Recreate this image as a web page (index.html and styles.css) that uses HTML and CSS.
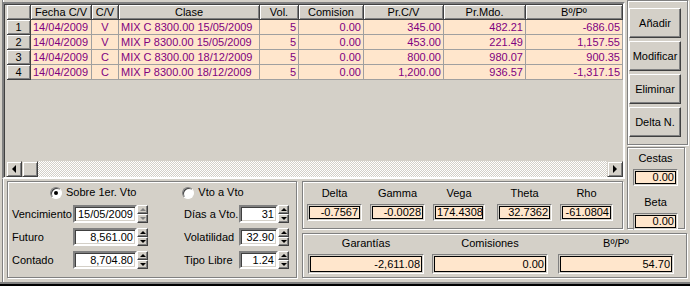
FILE: index.html
```html
<!DOCTYPE html>
<html lang="es">
<head>
  <meta charset="UTF-8" />
  <title>Cartera de opciones</title>
  <link rel="stylesheet" href="styles.css">
</head>
<body>
  <div class="window">
    <div class="form">

      <div class="gridframe">
        <table class="grid">
          <colgroup>
            <col class="w24"><col class="w61"><col class="w27"><col class="w141"><col class="w39"><col class="w65"><col class="w80"><col class="w82"><col class="w97">
          </colgroup>
          <tr>
            <th></th><th>Fecha C/V</th><th>C/V</th><th>Clase</th><th>Vol.</th><th>Comision</th><th>Pr.C/V</th><th>Pr.Mdo.</th><th>Bº/Pº</th>
          </tr>
          <tr>
            <th>1</th><td>14/04/2009</td><td class="c">V</td><td>MIX C 8300.00 15/05/2009</td><td class="r">5</td><td class="r">0.00</td><td class="r">345.00</td><td class="r">482.21</td><td class="r">-686.05</td>
          </tr>
          <tr>
            <th>2</th><td>14/04/2009</td><td class="c">V</td><td>MIX P 8300.00 15/05/2009</td><td class="r">5</td><td class="r">0.00</td><td class="r">453.00</td><td class="r">221.49</td><td class="r">1,157.55</td>
          </tr>
          <tr>
            <th>3</th><td>14/04/2009</td><td class="c">C</td><td>MIX C 8300.00 18/12/2009</td><td class="r">5</td><td class="r">0.00</td><td class="r">800.00</td><td class="r">980.07</td><td class="r">900.35</td>
          </tr>
          <tr>
            <th>4</th><td>14/04/2009</td><td class="c">C</td><td>MIX P 8300.00 18/12/2009</td><td class="r">5</td><td class="r">0.00</td><td class="r">1,200.00</td><td class="r">936.57</td><td class="r">-1,317.15</td>
          </tr>
        </table>
        <div class="hscroll">
          <span class="sb-btn"><i class="tri-left"></i></span>
          <span class="sb-btn"></span>
          <span class="sb-track"></span>
          <span class="sb-btn"><i class="tri-right"></i></span>
        </div>
      </div>

      <div class="group buttons">
        <button class="btn">Añadir</button>
        <button class="btn">Modificar</button>
        <button class="btn">Eliminar</button>
        <button class="btn">Delta N.</button>
      </div>

      <div class="group cestas">
        <div class="cap">Cestas</div>
        <div class="val">0.00</div>
        <div class="cap">Beta</div>
        <div class="val">0.00</div>
      </div>

      <div class="group params">
        <div class="radios">
          <span class="radio on"><i class="circle"></i>Sobre 1er. Vto</span>
          <span class="radio second"><i class="circle"></i>Vto a Vto</span>
        </div>
        <div class="fields">
          <span class="lbl">Vencimiento</span>
          <span class="spin"><span class="edit">15/05/2009</span><span class="updown off"><b><i class="tri-up"></i></b><b><i class="tri-down"></i></b></span></span>
          <span class="lbl">Días a Vto.</span>
          <span class="spin short"><span class="edit">31</span><span class="updown"><b><i class="tri-up"></i></b><b><i class="tri-down"></i></b></span></span>

          <span class="lbl">Futuro</span>
          <span class="spin"><span class="edit">8,561.00</span><span class="updown"><b><i class="tri-up"></i></b><b><i class="tri-down"></i></b></span></span>
          <span class="lbl">Volatilidad</span>
          <span class="spin short"><span class="edit">32.90</span><span class="updown"><b><i class="tri-up"></i></b><b><i class="tri-down"></i></b></span></span>

          <span class="lbl">Contado</span>
          <span class="spin"><span class="edit">8,704.80</span><span class="updown"><b><i class="tri-up"></i></b><b><i class="tri-down"></i></b></span></span>
          <span class="lbl">Tipo Libre</span>
          <span class="spin short"><span class="edit">1.24</span><span class="updown"><b><i class="tri-up"></i></b><b><i class="tri-down"></i></b></span></span>
        </div>
      </div>

      <div class="group greeks">
        <div class="cell"><div class="cap">Delta</div><div class="val">-0.7567</div></div>
        <div class="cell"><div class="cap">Gamma</div><div class="val">-0.0028</div></div>
        <div class="cell vega"><div class="cap">Vega</div><div class="val">174.4308</div></div>
        <div class="cell"><div class="cap">Theta</div><div class="val">32.7362</div></div>
        <div class="cell"><div class="cap">Rho</div><div class="val">-61.0804</div></div>
      </div>

      <div class="group totals">
        <div class="cell"><div class="cap">Garantías</div><div class="val">-2,611.08</div></div>
        <div class="cell"><div class="cap">Comisiones</div><div class="val">0.00</div></div>
        <div class="cell last"><div class="cap">Bº/Pº</div><div class="val">54.70</div></div>
      </div>

    </div>
  </div>
</body>
</html>
```

FILE: styles.css
```css
body {
  margin: 0;
  background: #d4d0c8;
  font-family: "Liberation Sans", Arial, sans-serif;
  font-size: 11px;
  color: #000;
}
.window {
  width: 690px;
  height: 286px;
  box-sizing: border-box;
  border-bottom: 2px solid #000;
}
.form {
  height: 284px;
  box-sizing: border-box;
  border-bottom: 2px solid #808080;
  display: grid;
  grid-template-columns: 297px 328px 65px;
  grid-template-rows: 146px 34px 51px 51px;
  /* left edge of the outer panel */
  background:
    linear-gradient(#808080, #808080) 2px 0 / 1px 100% no-repeat,
    linear-gradient(#fff, #fff) 3px 0 / 1px 100% no-repeat;
}

/* 3d helpers */
.group {
  border: 1px solid #808080;
  box-shadow: inset 1px 1px #fff, 1px 1px #fff;
  box-sizing: border-box;
  background: #d4d0c8;
}

/* string grid */
.gridframe {
  grid-column: 1 / 3;
  grid-row: 1 / 3;
  margin: 2px 0 1px 2px;
  border: 2px solid;
  border-color: #808080 #fff #fff #808080;
  box-shadow: inset 1px 1px #404040, inset -1px -1px #d4d0c8;
  background: #d4d0c8;
  padding: 1px 0 0 2px;
  display: flex;
  flex-direction: column;
}
.grid {
  border-collapse: separate;
  border-spacing: 0;
  table-layout: fixed;
  width: 616px;
  margin-left: 1px;
}
.w24 { width: 24px; }
.w61 { width: 61px; }
.w27 { width: 27px; }
.w141 { width: 141px; }
.w39 { width: 39px; }
.w65 { width: 65px; }
.w80 { width: 80px; }
.w82 { width: 82px; }
.w97 { width: 97px; }
.grid th,
.grid td {
  height: 14px;
  line-height: 14px;
  padding: 0 2px;
  white-space: nowrap;
  overflow: hidden;
  border-right: 1px solid #a0a0a0;
  border-bottom: 1px solid #a0a0a0;
}
.grid th {
  font-weight: normal;
  background: #d4d0c8;
  color: #000;
  box-shadow: inset 1px 1px #fff, inset -1px -1px #808080;
  border-color: #404040;
}
.grid td {
  background: #ffe6cc;
  color: #800080;
}
.grid td.c { text-align: center; }
.grid td.r { text-align: right; }

.hscroll {
  margin-top: auto;
  height: 16px;
  display: flex;
}
.sb-btn {
  width: 16px;
  height: 16px;
  box-sizing: border-box;
  border: 1px solid;
  border-color: #d4d0c8 #404040 #404040 #d4d0c8;
  box-shadow: inset 1px 1px #fff, inset -1px -1px #808080;
  background: #d4d0c8;
  display: flex;
  align-items: center;
  justify-content: center;
}
.sb-track {
  flex: 1;
  background: repeating-conic-gradient(#fff 0 25%, #d4d0c8 0 50%) 0 0 / 2px 2px;
}
.tri-left,
.tri-right,
.tri-up,
.tri-down {
  display: block;
  width: 0;
  height: 0;
  border: solid transparent;
}
.tri-left { border-width: 4px 4px 4px 0; border-right-color: #000; }
.tri-right { border-width: 4px 0 4px 4px; border-left-color: #000; }
.tri-up { border-width: 0 3px 3px; border-bottom-color: #000; }
.tri-down { border-width: 3px 3px 0; border-top-color: #000; }

/* right buttons */
.buttons {
  grid-column: 3;
  grid-row: 1;
  margin: 0 2px 1px 2px;
  padding: 7px 0 0 1px;
  display: flex;
  flex-direction: column;
  gap: 3px;
}
.btn {
  width: 52px;
  height: 30px;
  padding: 0;
  font: inherit;
  color: #000;
  background: #d4d0c8;
  border: 1px solid;
  border-color: #fff #404040 #404040 #fff;
  box-shadow: inset -1px -1px #808080;
}

/* value boxes */
.val {
  height: 17px;
  line-height: 11px;
  box-sizing: border-box;
  border: 1px solid;
  border-color: #808080 #fff #fff #808080;
  box-shadow: inset 0 0 0 1px #d4d0c8, inset 0 0 0 2px #000;
  background: #ffe6cc;
  text-align: right;
  padding: 2px 3px 0;
}
.cap {
  text-align: center;
  line-height: 13px;
}

.cestas {
  grid-column: 3;
  grid-row: 2 / 4;
  margin: 1px 5px 2px 2px;
  padding: 4px 6px 0 5px;
}
.cestas .val { margin: 4px 0 10px; }
.cestas .val:last-child { margin-bottom: 0; }

/* parameters */
.params {
  grid-column: 1;
  grid-row: 3 / 5;
  margin: 1px 0 4px 7px;
  padding: 4px 0 0 4px;
}
.radios {
  display: flex;
  height: 13px;
  line-height: 13px;
  padding-left: 38px;
}
.radio {
  display: flex;
  align-items: center;
  gap: 4px;
}
.radio.second { margin-left: 46px; }
.circle {
  width: 12px;
  height: 12px;
  box-sizing: border-box;
  border-radius: 50%;
  border: 1px solid;
  border-color: #808080 #fff #fff #808080;
  box-shadow: inset 1px 1px #404040;
  background: #fff;
  display: flex;
  align-items: center;
  justify-content: center;
}
.radio.on .circle::after {
  content: "";
  width: 4px;
  height: 4px;
  border-radius: 50%;
  background: #000;
}
.fields {
  margin-top: 6px;
  display: grid;
  grid-template-columns: 61px 111px 55px 50px;
  grid-auto-rows: 18px;
  row-gap: 5px;
  align-items: center;
}
.lbl { white-space: nowrap; }
.spin {
  display: flex;
  height: 18px;
  width: 75px;
}
.spin.short { width: 50px; }
.edit {
  flex: 1;
  box-sizing: border-box;
  border: 2px solid;
  border-color: #808080 #fff #fff #808080;
  box-shadow: inset 1px 1px #404040, inset -1px -1px #d4d0c8;
  background: #fff;
  text-align: right;
  line-height: 14px;
  padding: 0 2px;
}
.updown {
  width: 11px;
  display: flex;
  flex-direction: column;
}
.updown b {
  flex: 1;
  box-sizing: border-box;
  border: 1px solid;
  border-color: #fff #404040 #404040 #fff;
  box-shadow: inset -1px -1px #808080;
  background: #d4d0c8;
  display: flex;
  align-items: center;
  justify-content: center;
}
.updown.off .tri-up { border-bottom-color: #808080; }
.updown.off .tri-down { border-top-color: #808080; }

/* greeks */
.greeks {
  grid-column: 2;
  grid-row: 3;
  margin: 1px 2px 2px 5px;
  padding: 5px 0 0 4px;
  display: grid;
  grid-template-columns: 55px 55px 56px 55px 53px;
  column-gap: 8px;
}
.greeks .val { margin-top: 4px; }
.greeks .vega .val { width: 52px; }
.greeks .vega .cap { width: 52px; }

/* totals */
.totals {
  grid-column: 2 / 4;
  grid-row: 4;
  margin: 2px 3px 4px 5px;
  padding: 3px 0 0 5px;
  display: grid;
  grid-template-columns: 116px 116px 118px;
  column-gap: 8px;
}
.totals .last { margin-left: 2px; }
.totals .val {
  height: 20px;
  line-height: 14px;
  margin-top: 4px;
}
```
